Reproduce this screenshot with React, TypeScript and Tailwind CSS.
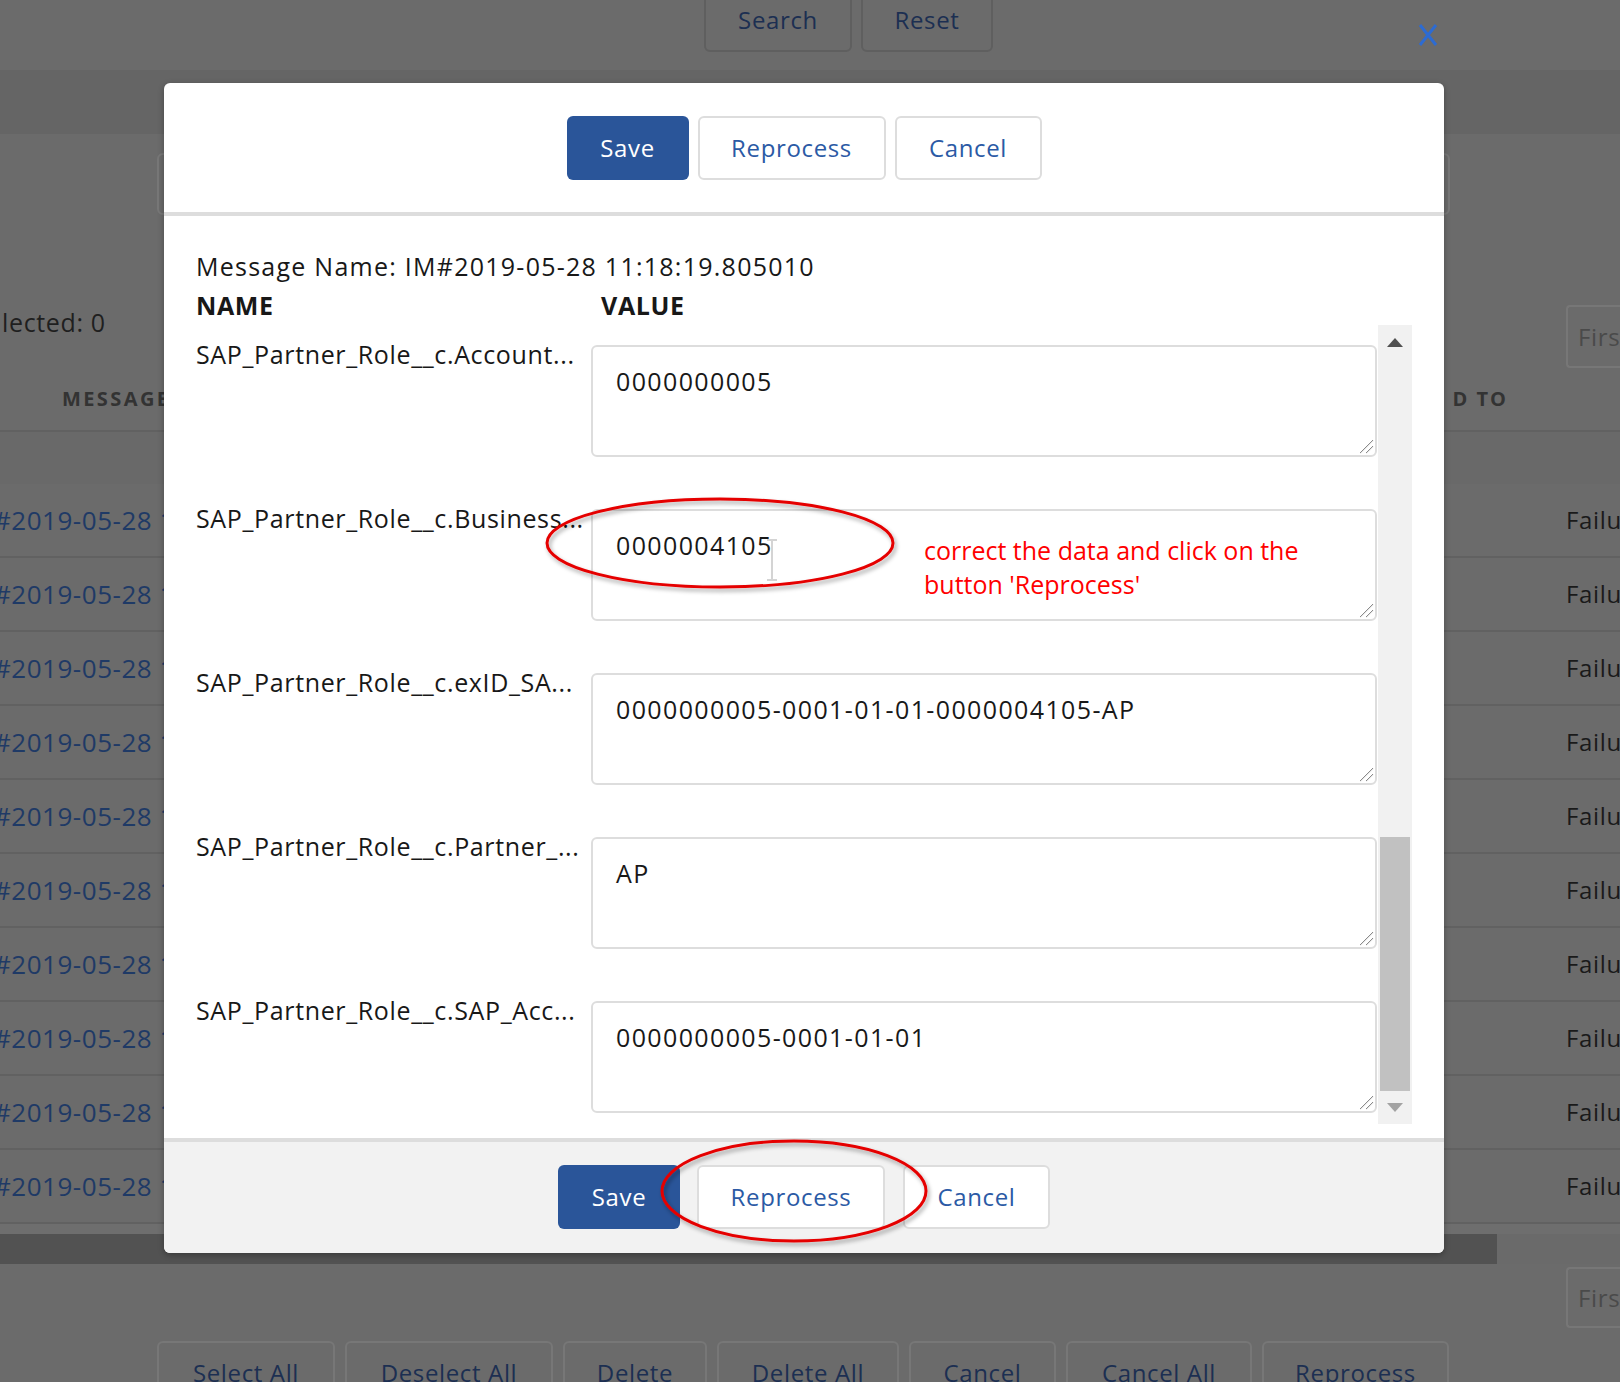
import React from "react"

const rows = [
  { name: "SAP_Partner_Role__c.Account...", value: "0000000005" },
  { name: "SAP_Partner_Role__c.Business...", value: "0000004105" },
  { name: "SAP_Partner_Role__c.exID_SA...", value: "0000000005-0001-01-01-0000004105-AP" },
  { name: "SAP_Partner_Role__c.Partner_...", value: "AP" },
  { name: "SAP_Partner_Role__c.SAP_Acc...", value: "0000000005-0001-01-01" },
]

const bottomButtons = [
  { label: "Select All", w: "w-[178px]" },
  { label: "Deselect All", w: "w-[208px]" },
  { label: "Delete", w: "w-[144px]" },
  { label: "Delete All", w: "w-[182px]" },
  { label: "Cancel", w: "w-[147px]" },
  { label: "Cancel All", w: "w-[186px]" },
  { label: "Reprocess", w: "w-[187px]" },
]

function BackgroundPage() {
  return (
    <div className="flex flex-col">
      {/* search bar */}
      <div className="flex h-[70px] items-start gap-[9px] pl-[704px]">
        <div className="-mt-[10px] flex h-[62px] w-[148px] items-center justify-center rounded-b-md border-2 border-[#5f5f5f] pb-[2px] text-[24px] text-[#1c2f52]">
          Search
        </div>
        <div className="-mt-[10px] flex h-[62px] w-[132px] items-center justify-center rounded-b-md border-2 border-[#5f5f5f] pb-[2px] text-[24px] text-[#1c2f52]">
          Reset
        </div>
      </div>
      <div className="h-[64px] bg-[#656565]" />
      <div className="ml-[157px] mt-[19px] h-[62px] w-[1293px] rounded-md border-2 border-[#787878]" />

      {/* selected + pager */}
      <div className="mt-[90px] flex h-[63px] items-start justify-between">
        <span className="-mt-[1px] pl-[2px] text-[25px] leading-[36px] text-[#1f1f1f]">lected: 0</span>
        <div className="flex h-[63px] w-[54px] items-center rounded-l-sm border-2 border-r-0 border-[#777] pl-[10px] text-[24px] text-[#4a4a4a]">
          Firs
        </div>
      </div>

      {/* table header */}
      <div className="flex h-[64px] items-center justify-between border-b-2 border-[#616161]">
        <span className="pl-[62px] text-[20px] font-bold tracking-[0.12em] text-[#333]">MESSAGE</span>
        <span className="pr-[112px] text-[20px] font-bold tracking-[0.1em] text-[#333]">D TO</span>
      </div>
      <div className="h-[52px] bg-[#696969]" />

      {rows.concat(rows).map((_, i) => (
        <div key={i} className="flex h-[74px] items-center justify-between border-b-2 border-[#616161]">
          <span className="-ml-[6px] whitespace-nowrap text-[26px] tracking-[0.02em] text-[#1f3a66]">#2019-05-28 1</span>
          <span className="w-[54px] overflow-hidden whitespace-nowrap text-[24px] text-[#1a1a1a]">Failure</span>
        </div>
      ))}

      <div className="h-[10px] bg-[#6e6e6e]" />
      <div className="flex h-[30px] bg-[#6a6a6a]">
        <div className="h-full w-[1497px] bg-[#525252]" />
      </div>
      <div className="flex justify-end">
        <div className="mt-[3px] flex h-[61px] w-[54px] items-center rounded-l-sm border-2 border-r-0 border-[#777] pl-[10px] text-[24px] text-[#4a4a4a]">
          Firs
        </div>
      </div>
      <div className="mt-[13px] flex gap-[10px] pl-[157px]">
        {bottomButtons.map((b) => (
          <div
            key={b.label}
            className={`${b.w} flex h-[60px] items-start justify-center whitespace-nowrap rounded-t-md border-2 border-b-0 border-[#777] pt-[12px] text-[24px] text-[#1c2f52]`}
          >
            {b.label}
          </div>
        ))}
      </div>
    </div>
  )
}

function OutlineButton({ label, w }: { label: string; w: string }) {
  return (
    <button
      type="button"
      className={`${w} flex h-[64px] items-center justify-center rounded-md border-2 border-[#dddddd] bg-white text-[24px] text-[#2b5aa5]`}
    >
      {label}
    </button>
  )
}

function SaveButton() {
  return (
    <button
      type="button"
      className="flex h-[64px] w-[122px] items-center justify-center rounded-md bg-[#2a5599] text-[24px] text-white"
    >
      Save
    </button>
  )
}

function Grabber() {
  return (
    <svg className="pointer-events-none absolute bottom-[3px] right-[3px]" width="16" height="16" viewBox="0 0 16 16">
      <path d="M15 2L2 15M15 8L8 15" stroke="#8a8a8a" strokeWidth="1" fill="none" />
      <path d="M15.6 2.6L2.6 15.6M15.6 8.6L8.6 15.6" stroke="#e6e6e6" strokeWidth="1" fill="none" />
    </svg>
  )
}

function Modal() {
  return (
    <div className="absolute left-[164px] top-[83px] flex h-[1170px] w-[1280px] flex-col overflow-hidden rounded-md bg-white shadow-[0_2px_6px_rgba(0,0,0,0.3)]">
      <div className="flex h-[133px] shrink-0 items-center justify-center gap-[9px] border-b-4 border-[#dddddd]">
        <SaveButton />
        <OutlineButton label="Reprocess" w="w-[188px]" />
        <OutlineButton label="Cancel" w="w-[147px]" />
      </div>

      <div className="flex min-h-0 flex-1 flex-col px-[32px] pb-[14px] pt-[32px] text-[25px] leading-[36px] text-[#181818]">
        <div className="whitespace-nowrap tracking-[0.05em]">Message Name: IM#2019-05-28 11:18:19.805010</div>
        <div className="mt-[3px] flex font-bold">
          <div className="w-[405px]">NAME</div>
          <div>VALUE</div>
        </div>

        <div className="mt-[2px] flex min-h-0 flex-1">
          <div className="flex w-[1182px] flex-col gap-[52px] overflow-hidden pt-[20px]">
            {rows.map((r, i) => (
              <div key={r.name} className="flex items-start">
                <div className="-mt-[9px] w-[395px] shrink-0 whitespace-nowrap">{r.name}</div>
                <div className="relative">
                  <textarea
                    readOnly
                    defaultValue={r.value}
                    className="block h-[112px] w-[786px] resize-none rounded-md border-2 border-[#dddddd] bg-white pl-[23px] pt-[16px] text-[25px] leading-[36px] tracking-[0.055em] text-[#181818] outline-none"
                  />
                  <Grabber />
                  {i === 1 && (
                    <>
                      <div className="pointer-events-none absolute left-[333px] top-[24px] whitespace-nowrap text-[25px] leading-[34px] tracking-normal text-[#ff0000]">
                        correct the data and click on the
                        <br />
                        button 'Reprocess'
                      </div>
                      <svg className="pointer-events-none absolute left-[174px] top-[30px]" width="14" height="42" viewBox="0 0 14 42">
                        <path d="M2 1h10M7 1v40M2 41h10" stroke="#d4d4d4" strokeWidth="2" fill="none" />
                      </svg>
                    </>
                  )}
                </div>
              </div>
            ))}
          </div>

          {/* scrollbar */}
          <div className="flex w-[34px] shrink-0 flex-col bg-[#f1f1f1]">
            <div className="flex h-[34px] items-center justify-center">
              <svg width="16" height="9" viewBox="0 0 16 9">
                <path d="M0 9L8 0L16 9Z" fill="#505050" />
              </svg>
            </div>
            <div className="flex flex-1 flex-col justify-end">
              <div className="mx-[2px] h-[254px] bg-[#c1c1c1]" />
            </div>
            <div className="flex h-[33px] items-center justify-center">
              <svg width="16" height="9" viewBox="0 0 16 9">
                <path d="M0 0L8 9L16 0Z" fill="#a3a3a3" />
              </svg>
            </div>
          </div>
        </div>
      </div>

      <div className="flex h-[115px] shrink-0 items-center justify-center border-t-4 border-[#dddddd] bg-[#f2f2f2] pb-[1px]">
        <SaveButton />
        <div className="ml-[17px]">
          <OutlineButton label="Reprocess" w="w-[188px]" />
        </div>
        <div className="ml-[18px]">
          <OutlineButton label="Cancel" w="w-[147px]" />
        </div>
      </div>
    </div>
  )
}

export default function App() {
  return (
    <div className="relative h-[1382px] w-[1620px] overflow-hidden bg-[#6b6b6b] font-['Open_Sans',sans-serif] tracking-[0.04em]">
      <BackgroundPage />

      {/* close icon */}
      <svg className="absolute left-[1418px] top-[24px]" width="20" height="22" viewBox="0 0 20 22">
        <path d="M2 1L18 21M18 1L2 21" stroke="#2d6bd2" strokeWidth="3" fill="none" />
      </svg>

      <Modal />

      {/* red annotation circles */}
      <svg className="pointer-events-none absolute left-0 top-0" width="1620" height="1382">
        <defs>
          <filter id="sh" x="-10%" y="-20%" width="120%" height="140%">
            <feDropShadow dx="2" dy="3" stdDeviation="2" floodColor="#000" floodOpacity="0.35" />
          </filter>
        </defs>
        <ellipse cx="720" cy="543" rx="173" ry="44" fill="none" stroke="#e50000" strokeWidth="3" filter="url(#sh)" />
        <ellipse cx="794" cy="1191" rx="132" ry="50" fill="none" stroke="#e50000" strokeWidth="3" filter="url(#sh)" />
      </svg>
    </div>
  )
}
